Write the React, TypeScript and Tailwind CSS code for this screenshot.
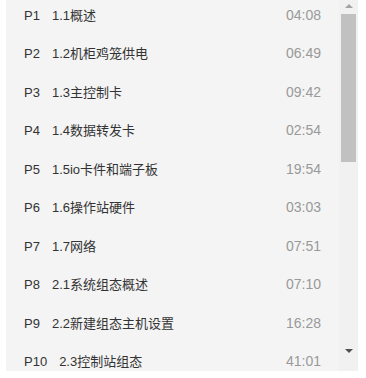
import React from 'react';

const EPISODES = [
  { p: 'P1', title: '1.1概述', time: '04:08' },
  { p: 'P2', title: '1.2机柜鸡笼供电', time: '06:49' },
  { p: 'P3', title: '1.3主控制卡', time: '09:42' },
  { p: 'P4', title: '1.4数据转发卡', time: '02:54' },
  { p: 'P5', title: '1.5io卡件和端子板', time: '19:54' },
  { p: 'P6', title: '1.6操作站硬件', time: '03:03' },
  { p: 'P7', title: '1.7网络', time: '07:51' },
  { p: 'P8', title: '2.1系统组态概述', time: '07:10' },
  { p: 'P9', title: '2.2新建组态主机设置', time: '16:28' },
  { p: 'P10', title: '2.3控制站组态', time: '41:01' },
];

function Scrollbar() {
  return (
    <div className="w-[19px] shrink-0 flex flex-col bg-[#f1f1f1]">
      <div className="h-[12px] flex items-center justify-center">
        <div className="w-0 h-0 border-x-[4px] border-x-transparent border-b-[4px] border-b-[#a3a3a3]" />
      </div>
      <div className="h-[148px] mt-[2px] mx-[2px] bg-[#c1c1c1]" />
      <div className="flex-1" />
      <div className="h-[17px] mb-[12px] flex items-center justify-center">
        <div className="w-0 h-0 border-x-[4px] border-x-transparent border-t-[4px] border-t-[#505050]" />
      </div>
    </div>
  );
}

export default function App() {
  return (
    <div className="w-[366px] h-[378px] bg-white pl-[6px] pr-[8px]" style={{ fontFamily: '"Liberation Sans", Arial, "Noto Sans CJK SC", sans-serif' }}>
      <div className="h-[371px] bg-[#f4f4f4] flex overflow-hidden">
        <div className="flex-1 overflow-hidden">
          <ul className="-mt-[4px]">
            {EPISODES.map((ep) => (
              <li key={ep.p} className="h-[38.5px] flex items-center pl-[18px] pr-[18px]">
                <span className="text-[13px] text-[#333] mr-[12px]">{ep.p}</span>
                <span className="flex-1 text-[13px] text-[#333]">{ep.title}</span>
                <span className="text-[14px] text-[#999]">{ep.time}</span>
              </li>
            ))}
          </ul>
        </div>
        <Scrollbar />
      </div>
    </div>
  );
}
